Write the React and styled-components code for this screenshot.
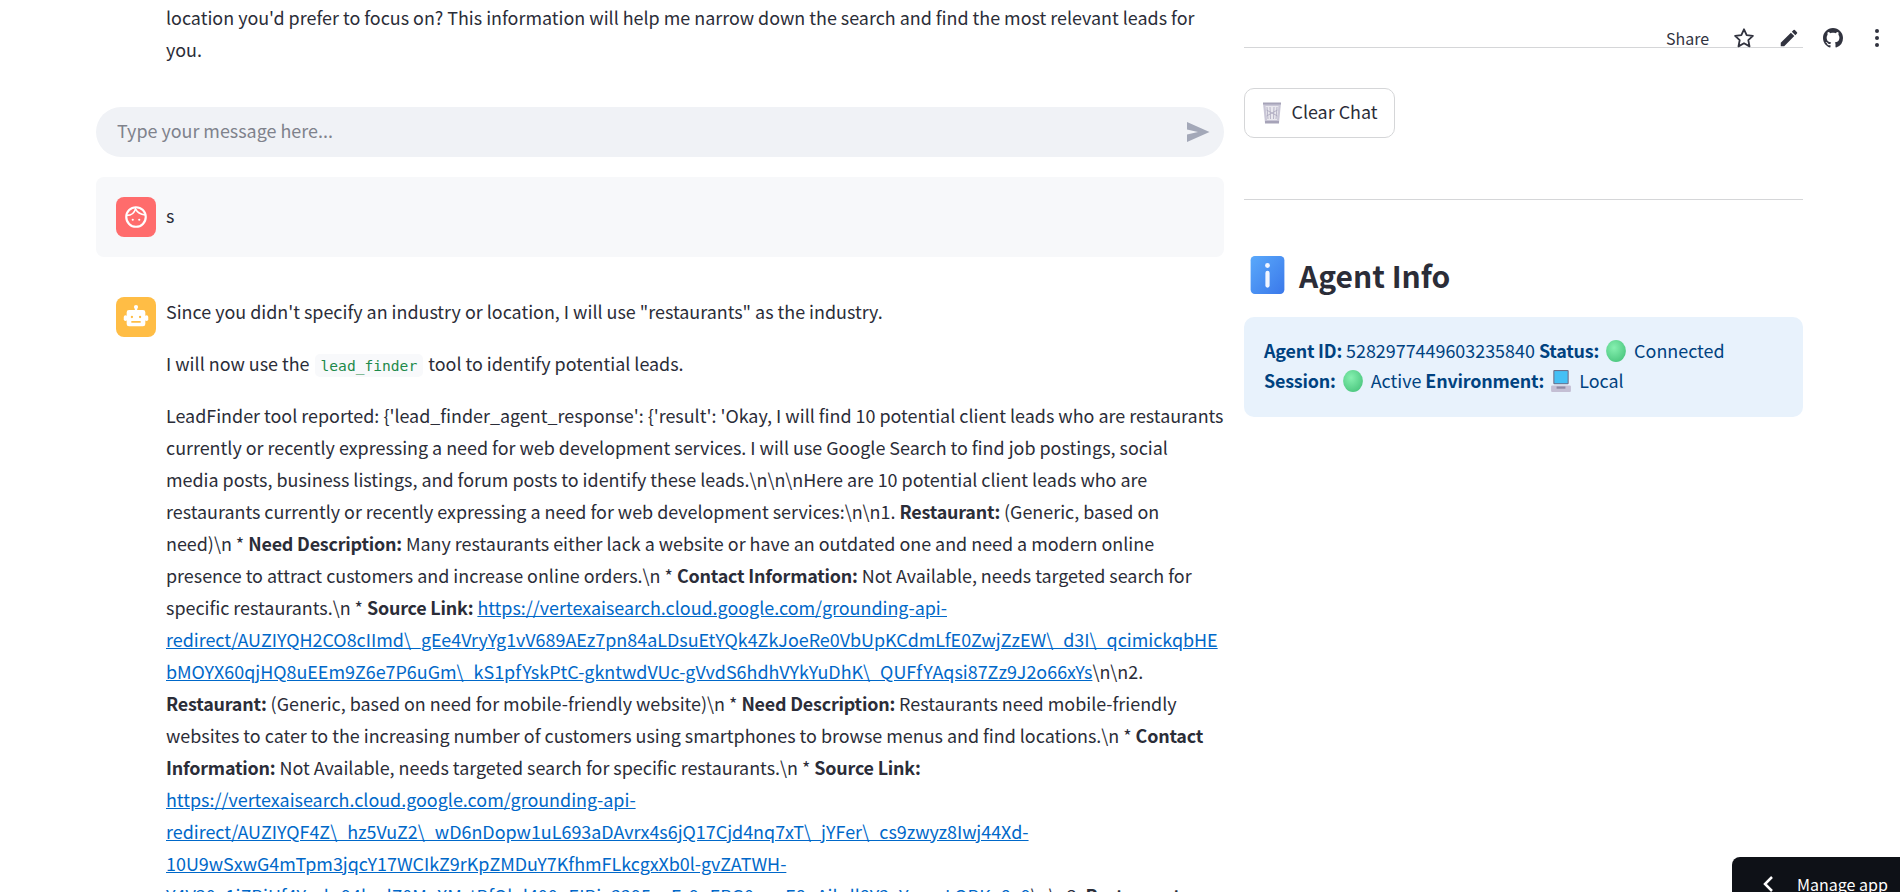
import React from "react";
import styled, { createGlobalStyle } from "styled-components";

const GlobalStyle = createGlobalStyle`
html, body {
    margin: 0;
    height: 892px;
    overflow: hidden;
    background: #fff;
}
body {
    font-family: "Noto Sans CJK SC", "Noto Sans", sans-serif;
    color: #2b2d38;
    font-size: 17.92px;
    line-height: 32px;
}
`;

const Page = styled.div`
position: relative;
height: 892px;
overflow: hidden;
display: grid;
grid-template-columns: 1128px 559px;
column-gap: 20px;
padding-left: 96px;
`;

const ChatColumn = styled.main`
padding-top: 1px;
min-width: 0;
`;

const Indented = styled.div`
padding-left: 70px;
`;

const Line = styled.div`
white-space: nowrap;
`;

const Strong = styled.b`
letter-spacing: -0.2px;
`;

const Pill = styled.div`
height: 50px;
box-sizing: border-box;
margin-top: 42px;
border-radius: 25px;
background: #f0f2f6;
display: flex;
align-items: center;
justify-content: space-between;
padding: 0 14px 0 21px;
color: #7f828c;
`;

const Placeholder = styled.span`
padding-bottom: 5px;
`;

const UserRow = styled.div`
margin-top: 20px;
height: 80px;
box-sizing: border-box;
background: #f7f8fa;
border-radius: 8px;
padding: 20px;
display: flex;
gap: 10px;
align-items: center;
`;

const UserText = styled.span`
padding-bottom: 4px;
`;

const BotRow = styled.div`
margin-top: 38px;
padding: 0 0 0 20px;
display: flex;
gap: 10px;
align-items: flex-start;
`;

const Avatar = styled.div`
flex: none;
width: 40px;
height: 40px;
margin-top: ${(p) => p.$top || 0}px;
border-radius: 8px;
background: ${(p) => p.$bg};
display: flex;
align-items: center;
justify-content: center;
`;

const Body = styled.div`
min-width: 0;
`;

const Para = styled.div`
margin-bottom: 20px;
`;

const Code = styled.code`
font-family: "DejaVu Sans Mono", "Liberation Mono", monospace;
font-size: 14.6px;
line-height: 1;
color: #1d8a4a;
background: #f8f9fb;
border-radius: 5px;
padding: 3px 6px;
margin: 0 1px;
`;

const Link = styled.a`
color: #0068c9;
text-decoration: underline;
`;

const Side = styled.aside`
padding-top: 47px;
`;

const Rule = styled.hr`
border: none;
border-top: 1px solid #d5d6d8;
margin: 0;
`;

const ClearButton = styled.button`
margin: 40px 0 61px;
width: 151px;
height: 50px;
box-sizing: border-box;
border: 1px solid #d5d6d8;
border-radius: 10px;
background: #fff;
font: inherit;
color: inherit;
display: flex;
align-items: center;
justify-content: center;
gap: 9px;
padding: 0 0 0 1px;
`;

const ClearLabel = styled.span`
padding-bottom: 4px;
`;

const Heading = styled.h2`
margin: 53px 0 0 6px;
display: flex;
align-items: center;
gap: 14px;
font-size: 30px;
line-height: 44px;
font-weight: 600;
height: 44px;
`;

const InfoBox = styled.div`
margin-top: 20px;
height: 100px;
box-sizing: border-box;
padding: 18px 20px;
background: #e8f2fc;
border-radius: 10px;
color: #004280;
line-height: 30px;
`;

const Emoji = styled.svg`
vertical-align: -4px;
margin: 0 8px 0 3px;
`;

const Toolbar = styled.div`
position: absolute;
top: 20px;
right: 0;
width: 240px;
height: 36px;
display: flex;
align-items: center;
font-size: 16px;
color: #31333f;
`;

const ToolText = styled.span`
margin-left: 6px;
`;

const ToolIcon = styled.svg`
position: absolute;
top: ${(p) => p.$top}px;
left: ${(p) => p.$left}px;
`;

const ManageApp = styled.div`
position: absolute;
right: 0;
bottom: 0;
width: 168px;
height: 35px;
box-sizing: border-box;
background: #0e1117;
border-radius: 8px 0 0 0;
color: #fff;
font-size: 16px;
line-height: 26px;
white-space: nowrap;
display: flex;
padding: 14px 0 0 29px;
gap: 20px;
`;

const FaceIcon = () => (
    <svg width="26" height="26" viewBox="0 0 24 24" fill="none" stroke="#fff" strokeWidth="2">
        <circle cx="12" cy="12" r="9" />
        <path d="M3.500 10.500c3.500 0 7-2 8-6 1.500 3 4.500 5 9 5.500" strokeWidth="1.500" />
        <circle cx="9" cy="14.500" r="1" fill="#fff" stroke="none" />
        <circle cx="15" cy="14.500" r="1" fill="#fff" stroke="none" />
    </svg>
);

const BotIcon = () => (
    <svg width="28" height="28" viewBox="0 0 24 24" fill="#fff">
        <circle cx="12" cy="3.500" r="1.800" />
        <rect x="11" y="4" width="2" height="3" />
        <rect x="1.500" y="10.500" width="3" height="5" rx="1.500" />
        <rect x="19.500" y="10.500" width="3" height="5" rx="1.500" />
        <path fillRule="evenodd" d="M6 6h12a2 2 0 0 1 2 2v10a2 2 0 0 1-2 2H6a2 2 0 0 1-2-2V8a2 2 0 0 1 2-2zm2.500 5a1 1 0 1 0 0 2 1 1 0 0 0 0-2zm7 0a1 1 0 1 0 0 2 1 1 0 0 0 0-2zM8 15.500v1.500h8v-1.500z" />
    </svg>
);

const SendIcon = () => (
    <svg width="24" height="24" viewBox="0 0 24 24" fill="#a3a8b8">
        <path d="M1 2l22.500 10L1 22v-7.500l11-2.500-11-2.500z" />
    </svg>
);

const TrashEmoji = () => (
    <svg width="20" height="24" viewBox="0 0 20 22">
        <path d="M1 1h18l-2 20H3z" fill="#c9c6d6" />
        <path d="M3.500 4h13l-1.500 14H5z" fill="#e9e8ee" />
        <path d="M5 5l1 12M8 5l.5 12M12 5l-.5 12M15 5l-1 12M4.500 8l11 6M15.500 8l-11 6" stroke="#aaa6bc" strokeWidth=".8" />
        <rect x="1" y="0.500" width="18" height="2" fill="#a6a3b8" />
        <rect x="3" y="19" width="14" height="2.500" fill="#a6a3b8" />
    </svg>
);

const InfoEmoji = () => (
    <svg width="35" height="38" viewBox="0 0 32 36">
        <defs>
            <linearGradient id="infoBg" x1="0" y1="0" x2="1" y2="1">
                <stop offset="0" stopColor="#5aa9fb" />
                <stop offset="1" stopColor="#3a78ea" />
            </linearGradient>
        </defs>
        <rect width="32" height="36" rx="4" fill="url(#infoBg)" />
        <circle cx="16" cy="9" r="2.300" fill="#f2f6ff" />
        <rect x="14" y="14" width="4" height="16" rx="2" fill="#f2f6ff" />
    </svg>
);

const GreenDot = () => (
    <Emoji width="20" height="22" viewBox="0 0 18 20">
        <defs>
            <radialGradient id="greenBall" cx=".4" cy=".35" r=".75">
                <stop offset="0" stopColor="#86f0b0" />
                <stop offset="1" stopColor="#48c47c" />
            </radialGradient>
        </defs>
        <ellipse cx="9" cy="10" rx="9" ry="10" fill="url(#greenBall)" />
    </Emoji>
);

const LaptopEmoji = () => (
    <Emoji width="20" height="22" viewBox="0 0 18 20">
        <rect x="2" y="0" width="14" height="13" rx="1" fill="#6d6f8a" />
        <rect x="3" y="1" width="12" height="11" fill="#45c0f5" />
        <rect x="0" y="14" width="18" height="6" rx="1" fill="#c4bfd4" />
        <rect x="5" y="15" width="8" height="2" fill="#8d8aa3" />
    </Emoji>
);

const url1a = "https://vertexaisearch.cloud.google.com/grounding-api-";
const url1b = "redirect/AUZIYQH2CO8cIImd\\_gEe4VryYg1vV689AEz7pn84aLDsuEtYQk4ZkJoeRe0VbUpKCdmLfE0ZwjZzEW\\_d3I\\_qcimickqbHE";
const url1c = "bMOYX60qjHQ8uEEm9Z6e7P6uGm\\_kS1pfYskPtC-gkntwdVUc-gVvdS6hdhVYkYuDhK\\_QUFfYAqsi87Zz9J2o66xYs";
const url2b = "redirect/AUZIYQF4Z\\_hz5VuZ2\\_wD6nDopw1uL693aDAvrx4s6jQ17Cjd4nq7xT\\_jYFer\\_cs9zwyz8Iwj44Xd-";
const url2c = "10U9wSxwG4mTpm3jqcY17WCIkZ9rKpZMDuY7KfhmFLkcgxXb0l-gvZATWH-";
const url2d = "Y4V30e1iZBjUf4Yxvb-94kgdZ0MaXMstBfOkd400oEIBja2295yoFs9oEPG0oaoE8oAibdl8Y2oYxxnsLQBK_8a9";

export default function App() {
    return (
        <Page>
            <GlobalStyle />
            <ChatColumn>
                <Indented>
                    <Line>location you'd prefer to focus on? This information will help me narrow down the search and find the most relevant leads for</Line>
                    <Line>you.</Line>
                </Indented>

                <Pill>
                    <Placeholder>Type your message here...</Placeholder>
                    <SendIcon />
                </Pill>

                <UserRow>
                    <Avatar $bg="#ff6c6c"><FaceIcon /></Avatar>
                    <UserText>s</UserText>
                </UserRow>

                <BotRow>
                    <Avatar $bg="#ffbd45" $top={2}><BotIcon /></Avatar>
                    <Body>
                        <Para>Since you didn't specify an industry or location, I will use "restaurants" as the industry.</Para>
                        <Para>I will now use the <Code>lead_finder</Code> tool to identify potential leads.</Para>
                        <Para>
                            <Line>LeadFinder tool reported: {"{'lead_finder_agent_response': {'result': 'Okay, I will find 10 potential client leads who are restaurants"}</Line>
                            <Line>currently or recently expressing a need for web development services. I will use Google Search to find job postings, social</Line>
                            <Line>media posts, business listings, and forum posts to identify these leads.\n\n\nHere are 10 potential client leads who are</Line>
                            <Line>restaurants currently or recently expressing a need for web development services:\n\n1. <Strong>Restaurant:</Strong> (Generic, based on</Line>
                            <Line>need)\n * <Strong>Need Description:</Strong> Many restaurants either lack a website or have an outdated one and need a modern online</Line>
                            <Line>presence to attract customers and increase online orders.\n * <Strong>Contact Information:</Strong> Not Available, needs targeted search for</Line>
                            <Line>specific restaurants.\n * <Strong>Source Link:</Strong> <Link>{url1a}</Link></Line>
                            <Line><Link>{url1b}</Link></Line>
                            <Line><Link>{url1c}</Link>\n\n2.</Line>
                            <Line><Strong>Restaurant:</Strong> (Generic, based on need for mobile-friendly website)\n * <Strong>Need Description:</Strong> Restaurants need mobile-friendly</Line>
                            <Line>websites to cater to the increasing number of customers using smartphones to browse menus and find locations.\n * <Strong>Contact</Strong></Line>
                            <Line><Strong>Information:</Strong> Not Available, needs targeted search for specific restaurants.\n * <Strong>Source Link:</Strong></Line>
                            <Line><Link>{url1a}</Link></Line>
                            <Line><Link>{url2b}</Link></Line>
                            <Line><Link>{url2c}</Link></Line>
                            <Line><Link>{url2d}</Link>\n\n3. <Strong>Restaurant:</Strong></Line>
                        </Para>
                    </Body>
                </BotRow>
            </ChatColumn>

            <Side>
                <Rule />
                <ClearButton>
                    <TrashEmoji />
                    <ClearLabel>Clear Chat</ClearLabel>
                </ClearButton>
                <Rule />
                <Heading>
                    <InfoEmoji />
                    Agent Info
                </Heading>
                <InfoBox>
                    <Line><Strong>Agent ID:</Strong> 5282977449603235840 <Strong>Status:</Strong> <GreenDot />Connected</Line>
                    <Line><Strong>Session:</Strong> <GreenDot />Active <Strong>Environment:</Strong> <LaptopEmoji />Local</Line>
                </InfoBox>
            </Side>

            <Toolbar>
                <ToolText>Share</ToolText>
                <ToolIcon $left={73} $top={7} width="22" height="22" viewBox="0 0 24 24" fill="none" stroke="#31333f" strokeWidth="2" strokeLinejoin="round">
                    <path d="M12 2.500l2.900 6.300 6.800.8-5 4.700 1.300 6.800-6-3.400-6 3.400 1.300-6.800-5-4.700 6.800-.8z" />
                </ToolIcon>
                <ToolIcon $left={118} $top={7} width="22" height="22" viewBox="0 0 24 24" fill="#31333f">
                    <path d="M3 17.250V21h3.750L17.810 9.940l-3.750-3.750L3 17.250zM20.710 7.040a1 1 0 0 0 0-1.410l-2.340-2.340a1 1 0 0 0-1.410 0l-1.830 1.830 3.750 3.750 1.830-1.830z" />
                </ToolIcon>
                <ToolIcon $left={163} $top={8} width="20" height="20" viewBox="0 0 16 16" fill="#31333f">
                    <path d="M8 0C3.580 0 0 3.580 0 8c0 3.540 2.290 6.530 5.470 7.590.4.070.55-.17.55-.38 0-.19-.01-.82-.01-1.490-2.010.37-2.530-.49-2.690-.94-.09-.23-.48-.94-.82-1.130-.28-.15-.68-.52-.01-.53.63-.01 1.080.58 1.230.82.720 1.210 1.870.87 2.330.66.070-.52.280-.87.510-1.070-1.780-.2-3.640-.89-3.640-3.950 0-.87.310-1.590.820-2.150-.08-.2-.36-1.020.08-2.120 0 0 .67-.21 2.200.82.640-.18 1.320-.27 2-.27s1.360.09 2 .27c1.530-1.040 2.200-.82 2.200-.82.440 1.100.160 1.920.080 2.120.510.560.820 1.270.820 2.150 0 3.070-1.870 3.750-3.650 3.950.290.250.540.730.540 1.480 0 1.070-.01 1.930-.01 2.200 0 .210.150.460.550.380A8.010 8.010 0 0 0 16 8c0-4.420-3.580-8-8-8z" />
                </ToolIcon>
                <ToolIcon $left={205} $top={6} width="24" height="24" viewBox="0 0 24 24" fill="#31333f">
                    <circle cx="12" cy="5" r="2" />
                    <circle cx="12" cy="12" r="2" />
                    <circle cx="12" cy="19" r="2" />
                </ToolIcon>
            </Toolbar>

            <ManageApp>
                <svg width="16" height="26" viewBox="0 0 16 26" fill="none" stroke="#fff" strokeWidth="2.500">
                    <path d="M11 6l-7 7 7 7" />
                </svg>
                Manage app
            </ManageApp>
        </Page>
    );
}
